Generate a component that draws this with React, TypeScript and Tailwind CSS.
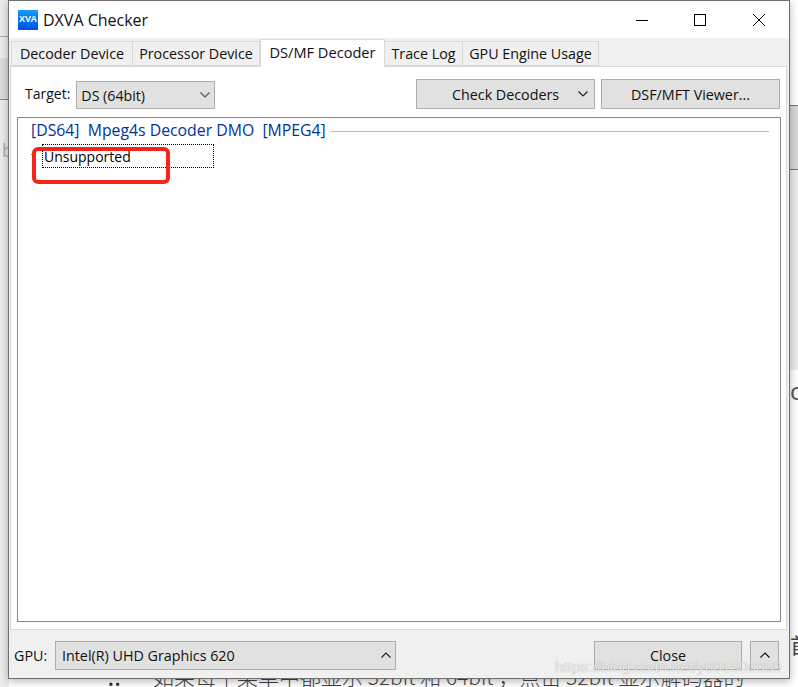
import React from "react";

const font = { fontFamily: '"Open Sans","Noto Sans CJK SC",sans-serif' };

function Tab({ label, active, w }: { label: string; active?: boolean; w: string }) {
  return active ? (
    <div className={`${w} h-[28px] -mb-px z-10 bg-white border border-[#d9d9d9] border-b-0 flex items-start justify-center pt-[2px] text-[14.6px] text-[#111]`}>{label}</div>
  ) : (
    <div className={`${w} h-[25px] bg-[#f0f0f0] border border-[#d9d9d9] border-l-0 first:border-l flex items-center justify-center text-[14.3px] text-[#111]`}>{label}</div>
  );
}

function Chevron({ up, className }: { up?: boolean; className?: string }) {
  return (
    <svg width="12" height="8" viewBox="0 0 12 8" className={className} fill="none" stroke="currentColor" strokeWidth="1.2">
      <path d={up ? "M1.5 6.5 L6 2 L10.5 6.5" : "M1.5 1.5 L6 6 L10.5 1.5"} />
    </svg>
  );
}

export default function App() {
  return (
    <div className="w-[798px] h-[687px] bg-white overflow-hidden relative" style={font}>
      {/* page behind the window */}
      <div className="absolute left-0 top-0 w-[9px] h-[687px] bg-[#ececec]" />
      <div className="absolute left-0 top-[36px] w-[9px] h-px bg-[#a8a8a8]" />
      <div className="absolute left-0 top-[58px] w-[9px] h-[42px] bg-[#dcdcdc] border-b border-[#8a8a8a]" />
      <div className="absolute left-[2px] top-[138px] text-[18px] leading-[24px] text-[#b9a9a9]">b</div>
      <div className="absolute left-[790px] top-[105px] w-[8px] h-[65px] bg-[#d6d6d6] border-y border-[#777]" />
      <div className="absolute left-[789px] top-[170px] w-[9px] h-[200px] bg-[#ececec]" />
      <div className="absolute left-[790px] top-[376px] text-[24px] leading-[30px] text-[#555]">c</div>
      <div className="absolute left-[790px] top-[632px] text-[21px] leading-[24px] text-[#444] whitespace-nowrap" style={{ fontFamily: '"Noto Sans CJK SC",sans-serif' }}>首</div>
      <div className="absolute left-[108px] top-[678px] text-[15px] leading-[12px] text-[#333] tracking-[1px]">••</div>
      <div className="absolute left-[153px] top-[664px] w-[645px] overflow-hidden text-[21px] leading-[24px] text-[#444] whitespace-nowrap" style={{ fontFamily: '"Noto Sans CJK SC",sans-serif', fontWeight: 300 }}>如果每个菜单中都显示 32bit 和 64bit ，点击 32bit 显示解码器的</div>

      {/* window */}
      <div className="absolute left-[8px] top-0 w-[782px] h-[679px] bg-[#f0f0f0] border border-[#707070] shadow-[0_2px_8px_rgba(0,0,0,0.3)] flex flex-col">
        <div className="h-[37px] bg-white flex items-center shrink-0">
          <div className="ml-[9px] w-[20px] h-[20px] bg-gradient-to-b from-[#1a9bff] to-[#0050e0] flex items-center justify-center text-[9px] font-bold text-white leading-none" style={{ fontFamily: '"Liberation Sans",sans-serif' }}>XVA</div>
          <div className="ml-[5px] text-[16px] text-[#111]">DXVA Checker</div>
          <div className="ml-auto flex items-center text-black">
            <svg width="14" height="14" viewBox="0 0 14 14" className="mr-[44px]" stroke="currentColor" fill="none"><path d="M1 7.5H13" /></svg>
            <svg width="14" height="14" viewBox="0 0 14 14" className="mr-[45px]" stroke="currentColor" fill="none"><rect x="1.5" y="1.5" width="11" height="11" /></svg>
            <svg width="14" height="14" viewBox="0 0 14 14" className="mr-[23px]" stroke="currentColor" fill="none"><path d="M1 1L13 13M13 1L1 13" /></svg>
          </div>
        </div>
        <div className="h-[28px] flex items-end pl-[2px] shrink-0">
          <Tab w="w-[122px]" label="Decoder Device" />
          <Tab w="w-[127px]" label="Processor Device" />
          <Tab w="w-[125px]" active label="DS/MF Decoder" />
          <Tab w="w-[78px]" label="Trace Log" />
          <Tab w="w-[136px]" label="GPU Engine Usage" />
        </div>
        <div className="flex-1 ml-[1px] mr-[2px] bg-white border border-[#d9d9d9] flex flex-col min-h-0">
          <div className="h-[50px] flex items-start shrink-0 pt-[15px] pl-[14px] pr-[6px]">
            <span className="text-[14px] text-[#111] mt-[1px] mr-[6px]">Target:</span>
            <div className="w-[139px] h-[28px] bg-[#e1e1e1] border border-[#adadad] flex items-center pl-[4px] pt-[2px] text-[14.2px] text-[#111] -mt-[1px]">
              DS (64bit)
              <Chevron className="ml-auto mr-[3px] -mt-[2px] text-[#555]" />
            </div>
            <div className="ml-auto w-[179px] h-[30px] -mt-[3px] bg-[#e1e1e1] border border-[#adadad] flex items-center text-[14.3px] text-[#111]">
              <span className="ml-[35px] pt-[2px]">Check Decoders</span>
              <Chevron className="ml-auto mr-[5px] text-[#222]" />
            </div>
            <div className="ml-[6px] w-[179px] h-[30px] -mt-[3px] bg-[#e1e1e1] border border-[#adadad] flex items-center justify-center pt-[2px] text-[14.3px] text-[#111]">DSF/MFT Viewer...</div>
          </div>
          <div className="flex-1 ml-[6px] mr-[5px] mb-[7px] bg-white border border-[#828790] relative pl-[13px] pt-[3px]">
            <div className="flex items-center h-[20px]">
              <span className="text-[15.8px] text-[#003399] whitespace-pre">[DS64]  Mpeg4s Decoder DMO  [MPEG4]</span>
              <div className="flex-1 h-px bg-[#a9b8e0] ml-[5px] mr-[11px]" />
            </div>
            <div className="mt-[3px] ml-[11px] w-[172px] h-[24px] border border-dotted border-black text-[14px] leading-[24px] text-black pl-px">Unsupported</div>
            <div className="absolute left-[13px] top-[36px] w-[3px] h-px bg-[#777]" />
            <div className="absolute left-[14px] top-[29px] w-[138px] h-[37px] border-4 border-[#f5251d] rounded-[6px]" />
          </div>
        </div>
        <div className="h-[48px] flex items-center shrink-0 pl-[5px] pr-[10px] pt-[2px]">
          <span className="text-[14.3px] text-[#111] w-[41px] pt-[2px]">GPU:</span>
          <div className="w-[341px] h-[29px] bg-[#e1e1e1] border border-[#adadad] flex items-center pl-[6px] text-[14.3px] text-[#111]">
            <span className="pt-[2px]">Intel(R) UHD Graphics 620</span>
            <Chevron up className="ml-auto mr-[3px] text-[#222]" />
          </div>
          <div className="ml-auto w-[148px] h-[29px] bg-[#e1e1e1] border border-[#adadad] flex items-center justify-center pt-[2px] text-[14.3px] text-[#111]">Close</div>
          <div className="ml-[8px] w-[29px] h-[29px] bg-[#e1e1e1] border border-[#adadad] flex items-center justify-center text-[#111]"><Chevron up /></div>
        </div>
      </div>
      <div className="absolute left-[555px] top-[656px] text-[15.4px] leading-[22px] text-white/80 whitespace-nowrap [text-shadow:0_0_1px_rgba(0,0,0,0.4)]" style={{ fontFamily: '"Liberation Sans",sans-serif' }}>https://blog.csdn.net/y601500359</div>
    </div>
  );
}
